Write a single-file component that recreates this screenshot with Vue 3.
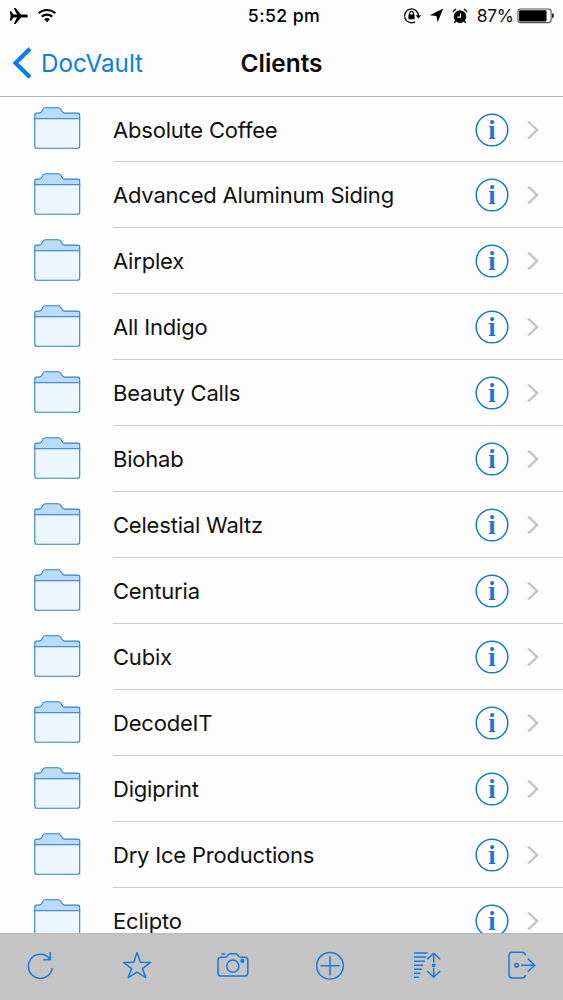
<script setup>
const clients = [
  'Absolute Coffee',
  'Advanced Aluminum Siding',
  'Airplex',
  'All Indigo',
  'Beauty Calls',
  'Biohab',
  'Celestial Waltz',
  'Centuria',
  'Cubix',
  'DecodeIT',
  'Digiprint',
  'Dry Ice Productions',
  'Eclipto',
]
</script>

<template>
  <div class="screen">
    <header class="header">
      <div class="status">
        <div class="side">
          <svg class="plane" width="20" height="18" viewBox="0 0 20 18">
            <path d="M.8 4.2H2.2L4.4 7.5H8.1L4.7.9H6.6L12 7.5H16.6C18 7.5 19 8.2 19 9S18 10.5 16.6 10.5H12L6.6 17.1H4.7L8.1 10.5H4.4L2.2 13.8H.8L1.7 9Z" />
          </svg>
          <svg class="wifi" width="20" height="15" viewBox="0 0 20 15">
            <path d="M1.7 5.2C6.4.9 13.6.9 18.3 5.2M4.8 8.6C7.8 5.9 12.2 5.9 15.2 8.6" fill="none" stroke="#000" stroke-width="2.1" />
            <path d="M7 11.2C8.7 9.7 11.3 9.7 13 11.2L10 14.2Z" />
          </svg>
        </div>
        <div class="time">5:52 pm</div>
        <div class="side right">
          <svg class="lock" width="19" height="18" viewBox="0 0 19 18">
            <path d="M12.2 14.7A6.9 6.9 0 1 1 15.4 8.8" fill="none" stroke="#000" stroke-width="1.3" />
            <path d="M12.6 8.2H18.2L15.4 11.6ZM5.4 7.6H11.6V12.3H5.4Z" />
            <path d="M6.7 8V6.2A1.8 1.8 0 0 1 10.3 6.2V8" fill="none" stroke="#000" stroke-width="1.2" />
          </svg>
          <svg class="arrow" width="15" height="15" viewBox="0 0 15 15">
            <path d="M14.3.6L8.6 14.2L7.4 7.9L.7 7.2Z" />
          </svg>
          <svg class="alarm" width="16" height="16" viewBox="0 0 16 16">
            <circle cx="8" cy="8.6" r="6.3" />
            <path d="M1 3.8A8.5 8.5 0 0 1 4 1.2M15 3.8A8.5 8.5 0 0 0 12 1.2M3.8 12.7L2.4 15M12.2 12.7L13.6 15" fill="none" stroke="#000" stroke-width="1.4" />
            <path d="M8.5 5.2V9.1H5.3" fill="none" stroke="#fff" stroke-width="1.1" />
          </svg>
          <span class="percent">87%</span>
          <svg class="battery" width="38" height="16" viewBox="0 0 38 16">
            <rect x=".9" y="1" width="33.2" height="13.6" rx="2.6" fill="#fff" stroke="#555" stroke-width="1.1" />
            <rect x="2.1" y="2.2" width="27.4" height="11.2" rx="1" />
            <path d="M35.2 5.1C37.4 5.7 37.4 9.9 35.2 10.5Z" />
          </svg>
        </div>
      </div>
      <nav class="navbar">
        <div class="back">
          <svg width="20" height="32" viewBox="0 0 20 32">
            <path d="M18 1.7L3.5 16L18 30.3" fill="none" stroke="#087bf0" stroke-width="4.2" />
          </svg>
          <span>DocVault</span>
        </div>
        <h1>Clients</h1>
      </nav>
    </header>

    <main class="list">
      <div v-for="name in clients" :key="name" class="row">
        <svg class="folder" width="48" height="43" viewBox="0 0 48 43" stroke="#357fc3" stroke-width="1.1">
          <path d="M.8 12V8Q.8 6.1 2.8 6.1H4.8Q6.9 6 7.7 4.4L8.8 2.4Q9.7.7 11.8.7H24Q26.1.7 27 2.4L28 4.2Q29 6.1 31 6.1H43.7Q45.7 6.1 45.7 8V12Z" fill="#b9dcfb" />
          <path d="M.8 11.8H45.7V39.2Q45.7 41.2 43.7 41.2H2.8Q.8 41.2 .8 39.2Z" fill="#ebf6ff" />
        </svg>
        <div class="cell">
          <span class="name">{{ name }}</span>
          <svg class="info" width="34" height="34" viewBox="0 0 34 34">
            <circle cx="17" cy="17" r="15.8" fill="none" stroke="#1777d5" stroke-width="1.5" />
            <text x="17" y="26" text-anchor="middle">i</text>
          </svg>
          <svg class="chevron" width="13" height="20" viewBox="0 0 13 20">
            <path d="M1.2 1.5L10.1 10L1.2 18.5" fill="none" stroke="#c4c3c7" stroke-width="2.4" />
          </svg>
        </div>
      </div>
    </main>

    <footer class="toolbar">
      <svg viewBox="0 0 32 32">
        <path d="M27.3 17.9A12 12 0 1 1 24.5 8.5M25.2 1.9V9.8H18.3" />
      </svg>
      <svg viewBox="0 0 32 32">
        <path d="M16 2.6L19.4 12.2L29.4 12.5L21.4 18.6L24.8 27.6L16 22.2L7.2 27.6L10.6 18.6L2.6 12.5L12.6 12.2Z" />
      </svg>
      <svg viewBox="0 0 32 32">
        <path d="M4 7.2H8.2C10.8 7.2 10.5 3.8 13.5 3.8H18.5C21.5 3.8 21.2 7.2 23.8 7.2H27.8Q30.8 7.2 30.8 10.2V23.1Q30.8 26.1 27.8 26.1H4Q1 26.1 1 23.1V10.2Q1 7.2 4 7.2ZM4.4 4.1H8.4" />
        <circle cx="15.8" cy="16.1" r="6.1" />
        <circle class="solid" cx="25.4" cy="10.9" r="1.3" />
      </svg>
      <svg viewBox="0 0 32 32">
        <circle cx="16" cy="15.8" r="13.3" />
        <path d="M16 6.2V25.4M6.4 15.8H25.6" />
      </svg>
      <svg viewBox="0 0 32 32">
        <path d="M4 3H17.6M4 7.1H16.3M4 11.2H14.8M4 15.2H13.2M4 19.2H11.8M4 23.2H10.3M4 27.2H8.8" />
        <path d="M17.2 9.4L23.7 3.2L30.2 9.4M23.7 3.2V12.6M17.2 21L23.7 27.2L30.2 21M23.7 27.2V18" />
        <circle class="solid" cx="23.7" cy="15.3" r="1.1" />
      </svg>
      <svg viewBox="0 0 32 32">
        <path d="M19.7 5.2C19.2 3.2 18 2.2 16 2.2H6.2Q3 2.2 3 5.4V24.8Q3 28 6.2 28H16C18 28 19.2 27 19.7 25M15 15.2H28.5M21.7 8.6L28.7 15.2L21.7 21.8" />
        <circle cx="10.7" cy="15.2" r="1.8" />
      </svg>
    </footer>
  </div>
</template>

<style>
body {
  background: #fdfdfd;
}
</style>

<style scoped>
.screen {
  height: 1000px;
  display: flex;
  flex-direction: column;
  overflow: hidden;
  background: #fdfdfe;
  color: #111;
  font-family: Inter, "Liberation Sans", sans-serif;
}
svg {
  display: block;
  flex: none;
}
.header {
  flex: none;
  box-sizing: border-box;
  height: 97px;
  border-bottom: 1px solid #b5b5b7;
}
.status {
  height: 31px;
  display: grid;
  grid-template-columns: 1fr auto 1fr;
  align-items: center;
}
.side {
  display: flex;
  align-items: center;
  padding-left: 9px;
}
.wifi {
  margin-left: 8px;
}
.right {
  justify-content: flex-end;
  padding: 0 8px 0 0;
}
.time {
  padding-left: 5px;
  font-size: 17.7px;
  font-weight: 500;
  letter-spacing: 0.4px;
  color: #000;
}
.arrow {
  margin-left: 7px;
}
.alarm {
  margin-left: 8px;
}
.percent {
  margin-left: 9px;
  font-size: 17.5px;
  letter-spacing: -0.4px;
}
.battery {
  margin-left: 3.5px;
}
.navbar {
  position: relative;
  height: 64px;
  display: flex;
  align-items: center;
  justify-content: center;
}
.back {
  position: absolute;
  left: 12px;
  top: 16px;
  height: 32px;
  display: flex;
  align-items: center;
  gap: 9px;
  font-size: 24.2px;
  color: #087bf0;
}
h1 {
  margin: 0;
  font-size: 24.4px;
  font-weight: 600;
  color: #080808;
}
.list {
  flex: 1;
  min-height: 0;
  overflow: hidden;
}
.row {
  display: flex;
  height: 65.95px;
  padding-left: 34px;
}
.row:first-child {
  height: 64.3px;
}
.folder {
  margin: 12px 31px 0 0;
}
.row:first-child .folder {
  margin-top: 10px;
}
.cell {
  flex: 1;
  display: flex;
  align-items: center;
  padding: 1px 23px 0 0;
  border-top: 1px solid #cbcbcd;
}
.row:first-child .cell {
  border-top: 0;
}
.name {
  flex: 1;
  font-size: 22px;
  letter-spacing: -0.2px;
}
.info text {
  font: bold 26.5px "Liberation Serif", serif;
  fill: #1777d5;
}
.chevron {
  margin-left: 18px;
}
.toolbar {
  flex: none;
  height: 67px;
  box-sizing: border-box;
  display: flex;
  justify-content: space-between;
  align-items: center;
  padding: 0 25px 2px;
  background: #c5c4c5;
  border-top: 1px solid #b9b9ba;
}
.toolbar svg {
  width: 32px;
  height: 32px;
  fill: none;
  stroke: #1878dc;
  stroke-width: 1.5;
  stroke-linejoin: round;
}
.toolbar .solid {
  fill: #1878dc;
}
</style>
